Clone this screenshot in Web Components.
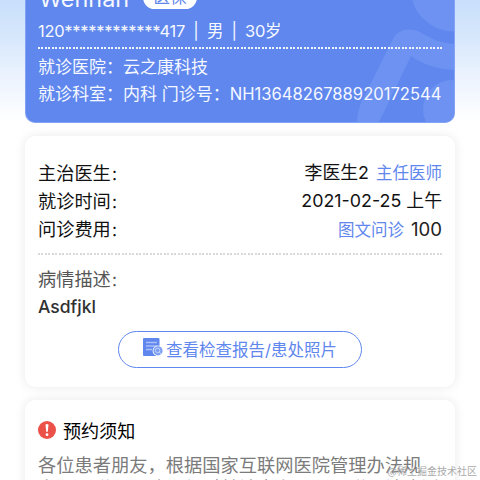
<!DOCTYPE html>
<html lang="zh-CN">
<head>
<meta charset="utf-8">
<title>就诊详情</title>
<style>
html,body{margin:0;height:480px;overflow:hidden}
body{background:#fff;font-family:Inter,"Noto Sans CJK SC",sans-serif}
</style>
</head>
<body>
<visit-page></visit-page>
<script>
const define = (name, html) => {
  const t = document.createElement('template');
  t.innerHTML = html;
  customElements.define(name, class extends HTMLElement {
    constructor() {
      super();
      this.attachShadow({ mode: 'open' }).append(t.content.cloneNode(true));
    }
  });
};

define('dotted-line', `<style>
:host{display:block;height:2px;background:repeating-linear-gradient(90deg,var(--dot,#d9d9d9) 0 2px,transparent 2px 3.5px)}
</style>`);

define('info-row', `<style>
:host{display:flex;justify-content:space-between;align-items:center;height:28px;line-height:28px;white-space:nowrap}
</style><span><slot name="label"></slot></span><span><slot></slot></span>`);

define('white-card', `<style>
:host{display:block;box-sizing:border-box;background:#fff;border-radius:10px;box-shadow:0 0 11px rgba(0,0,0,.09);padding:0 13px}
</style><slot></slot>`);

define('patient-card', `<style>
:host{display:block;position:relative;box-sizing:border-box;height:123px;overflow:hidden;background:#5f87ee;color:#f5f8ff;border:1px solid #81a2f5;border-top:0;border-radius:0 0 10px 10px;padding:0 12px}
svg{position:absolute;left:0;top:0}
.c{position:relative;display:flex;flex-direction:column;white-space:nowrap}
.name{display:flex;height:18px;align-items:flex-start;gap:14px;padding-left:1px}
.name b{font-weight:400;font-size:23.4px;line-height:30px;margin-top:-16px}
.tag{width:54px;height:23px;line-height:22px;border-radius:12px;background:#fff;color:#5f87ee;font-size:16.5px;text-align:center;margin-top:-14px}
.id{font-size:16.5px;height:28px;line-height:26px;word-spacing:4px;letter-spacing:-.28px}
.l{font-size:17px;height:27px;line-height:27px}
.l span{font-size:16.58px}
dotted-line{--dot:#f1f5ff;margin-top:1px;margin-bottom:4.5px}
</style>
<svg width="428" height="123" viewBox="27 0 428 123" fill="#6d92f1"><circle cx="455" cy="-12" r="43.5"/><path d="M358 124C358 116 359 110 363 101L394 39C398 30 409 27 421 32C433 40 443 43 455 44V70C439 69 424 65 412 56L384 114C381 119 380 122 380 124Z"/><circle cx="453" cy="109" r="29"/></svg>
<div class="c"><div class="name"><b>Wennan</b><span class="tag">医保</span></div>
<div class="id"><slot name="id"></slot></div><dotted-line></dotted-line>
<div class="l"><slot name="hospital"></slot></div><div class="l"><slot name="dept"></slot><span><slot name="number"></slot></span></div></div>`);

define('report-button', `<style>
:host{display:flex;box-sizing:border-box;width:244px;height:37px;border:1.3px solid #5f87ee;border-radius:19px;color:#5f87ee;font-size:16.5px;align-items:center;justify-content:center;gap:3px;white-space:nowrap}
svg{margin-top:-5px;flex:none}
span{line-height:35px;margin-top:1px}
</style><svg width="20" height="19" viewBox="0 0 20 19"><rect x="0" y="0" width="16.5" height="18" rx="1" fill="#5f87ee"/><path d="M3 4.5h11M3 8h11M3 11.5h6" stroke="#a9c0f8" stroke-width="1.3"/><circle cx="15" cy="12.8" r="5.4" fill="#fff"/><circle cx="15" cy="12.8" r="4.6" fill="#7d9ff3"/><circle cx="14.7" cy="12.4" r="2.2" fill="#789af2" stroke="#c8d7fc" stroke-width="1"/><path d="m16.2 14 1.8 1.8" stroke="#c8d7fc"/></svg><span><slot></slot></span>`);

define('alert-icon', `<style>:host{display:block;width:18px;height:18px}svg{display:block}</style>
<svg width="18" height="18" viewBox="0 0 18 18"><circle cx="9" cy="9" r="9" fill="#ec5149"/><path d="M7.5 3.5Q9 2.4 10.5 3.5L9.8 10.7H8.2Z" fill="#fff"/><circle cx="9" cy="13.7" r="1.4" fill="#fff"/></svg>`);

define('visit-page', `<style>
:host{display:block;position:relative;width:480px;height:480px;overflow:hidden;background:linear-gradient(#c8dffb 0,#d8e8fc 40px,#edf4fe 80px,#fff 122px)}
main{display:flex;flex-direction:column;width:430px;margin-left:25px}
patient-card{width:430px}
.visit{height:251px;margin:13px 0 13px;padding-top:23px;color:#111}
.rows{font-size:17.85px}
.rows i{font-style:normal;color:#5f87ee;font-size:16.5px}
.rows b{font-weight:400;font-size:18.6px;color:#222}
.wide{word-spacing:2px}
.rows dotted-line{margin:10px 0 10px}
.desc{font-size:18.2px;height:28px;line-height:28px;color:#555}
.val{font-size:17.5px;font-weight:500;line-height:28px;color:#303030}
.btn{display:flex;justify-content:center;margin-top:10px}
.notice{height:160px;padding-top:20px}
.head{display:flex;align-items:center;gap:7px;height:20px;font-size:18.1px;color:#000}
.lab{font-size:18.2px}
.k{font-size:15px;line-height:1}
p{margin:14px 0 0;width:404px;font-size:18.25px;line-height:23px;color:#7b7b7b}
.mark{position:absolute;right:3px;bottom:1px;font:10px/16px "Noto Sans CJK SC",sans-serif;color:#aaa;white-space:nowrap}
</style>
<main>
<patient-card><span slot="id">120************417 | 男 | 30岁</span><span slot="hospital">就诊医院：云之康科技</span><span slot="dept">就诊科室：内科 门诊号：</span><span slot="number">NH1364826788920172544</span></patient-card>
<white-card class="visit"><div class="rows">
<info-row class="wide"><span slot="label" class="lab">主治医生<span class="k">：</span></span>李医生2 <i>主任医师</i></info-row>
<info-row><span slot="label" class="lab">就诊时间<span class="k">：</span></span>2021-02-25 上午</info-row>
<info-row class="wide"><span slot="label" class="lab">问诊费用<span class="k">：</span></span><i>图文问诊</i> <b>100</b></info-row>
<dotted-line></dotted-line></div>
<div class="desc">病情描述<span class="k">：</span></div><div class="val">Asdfjkl</div>
<div class="btn"><report-button>查看检查报告/患处照片</report-button></div></white-card>
<white-card class="notice"><div class="head"><alert-icon></alert-icon><span>预约须知</span></div>
<p>各位患者朋友，根据国家互联网医院管理办法规定，互联网医院不得对首诊患者开展互联网诊疗活</p></white-card>
</main>
<div class="mark">@稀土掘金技术社区</div>`);
</script>
</body>
</html>
